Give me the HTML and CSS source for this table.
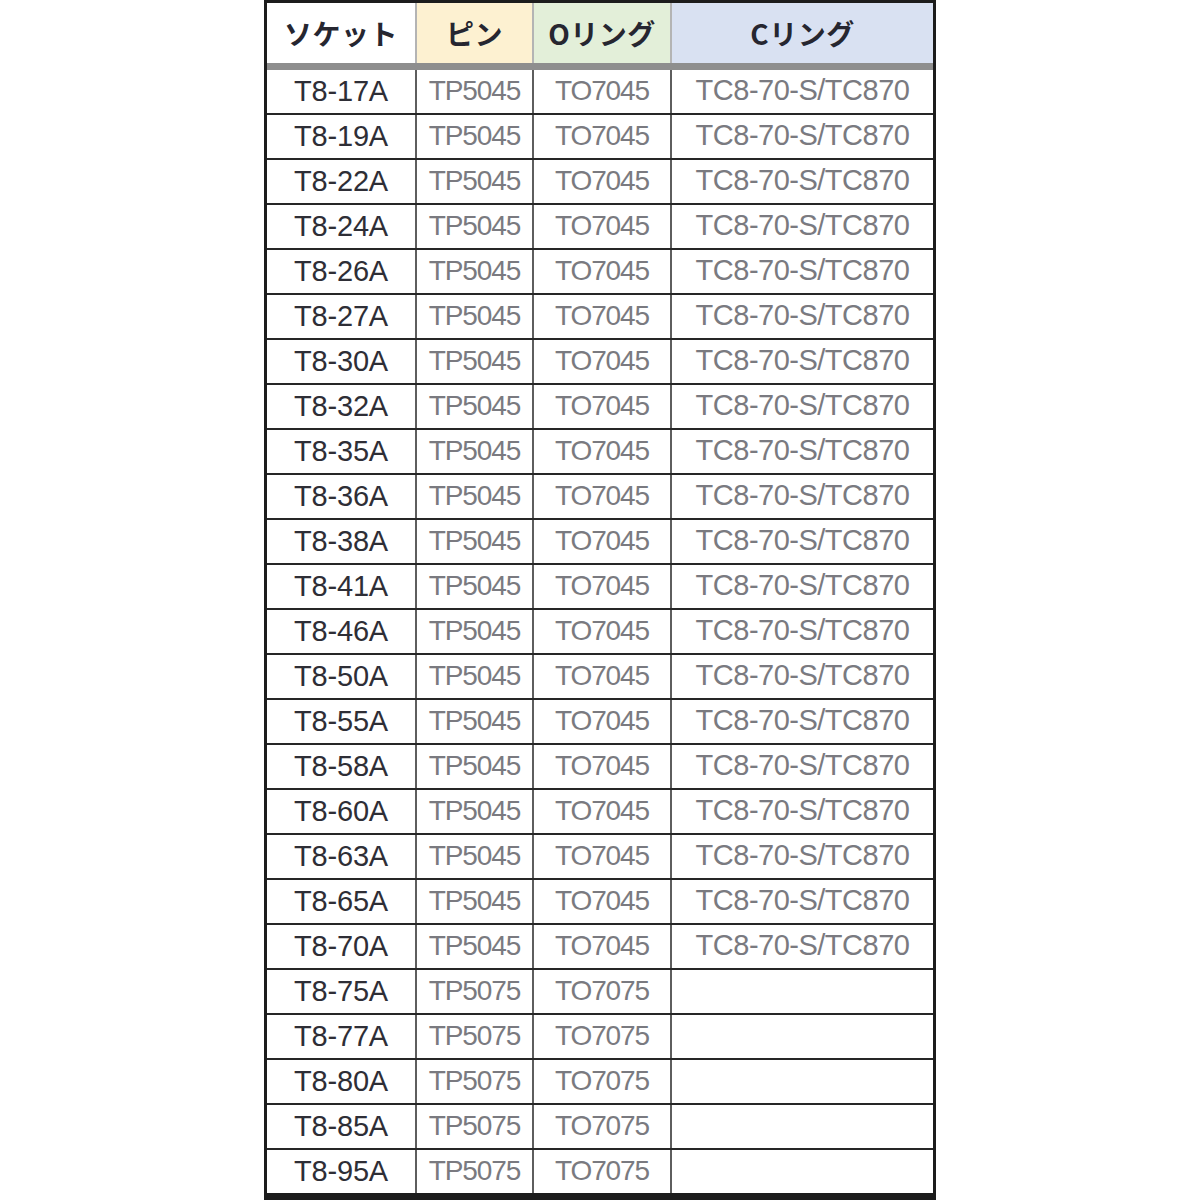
FILE: index.html
```html
<!DOCTYPE html>
<html lang="ja">
<head>
<meta charset="utf-8">
<title>ソケット対応表</title>
<link rel="stylesheet" href="styles.css">
</head>
<body>
<div class="sheet">
  <div class="row head">
    <div class="cell h-socket">ソケット</div>
    <div class="cell h-pin">ピン</div>
    <div class="cell h-oring">Oリング</div>
    <div class="cell h-cring">Cリング</div>
  </div>
  <div class="row"><div class="cell sock">T8-17A</div><div class="cell pin">TP5045</div><div class="cell pin">TO7045</div><div class="cell cr">TC8-70-S/TC870</div></div>
  <div class="row"><div class="cell sock">T8-19A</div><div class="cell pin">TP5045</div><div class="cell pin">TO7045</div><div class="cell cr">TC8-70-S/TC870</div></div>
  <div class="row"><div class="cell sock">T8-22A</div><div class="cell pin">TP5045</div><div class="cell pin">TO7045</div><div class="cell cr">TC8-70-S/TC870</div></div>
  <div class="row"><div class="cell sock">T8-24A</div><div class="cell pin">TP5045</div><div class="cell pin">TO7045</div><div class="cell cr">TC8-70-S/TC870</div></div>
  <div class="row"><div class="cell sock">T8-26A</div><div class="cell pin">TP5045</div><div class="cell pin">TO7045</div><div class="cell cr">TC8-70-S/TC870</div></div>
  <div class="row"><div class="cell sock">T8-27A</div><div class="cell pin">TP5045</div><div class="cell pin">TO7045</div><div class="cell cr">TC8-70-S/TC870</div></div>
  <div class="row"><div class="cell sock">T8-30A</div><div class="cell pin">TP5045</div><div class="cell pin">TO7045</div><div class="cell cr">TC8-70-S/TC870</div></div>
  <div class="row"><div class="cell sock">T8-32A</div><div class="cell pin">TP5045</div><div class="cell pin">TO7045</div><div class="cell cr">TC8-70-S/TC870</div></div>
  <div class="row"><div class="cell sock">T8-35A</div><div class="cell pin">TP5045</div><div class="cell pin">TO7045</div><div class="cell cr">TC8-70-S/TC870</div></div>
  <div class="row"><div class="cell sock">T8-36A</div><div class="cell pin">TP5045</div><div class="cell pin">TO7045</div><div class="cell cr">TC8-70-S/TC870</div></div>
  <div class="row"><div class="cell sock">T8-38A</div><div class="cell pin">TP5045</div><div class="cell pin">TO7045</div><div class="cell cr">TC8-70-S/TC870</div></div>
  <div class="row"><div class="cell sock">T8-41A</div><div class="cell pin">TP5045</div><div class="cell pin">TO7045</div><div class="cell cr">TC8-70-S/TC870</div></div>
  <div class="row"><div class="cell sock">T8-46A</div><div class="cell pin">TP5045</div><div class="cell pin">TO7045</div><div class="cell cr">TC8-70-S/TC870</div></div>
  <div class="row"><div class="cell sock">T8-50A</div><div class="cell pin">TP5045</div><div class="cell pin">TO7045</div><div class="cell cr">TC8-70-S/TC870</div></div>
  <div class="row"><div class="cell sock">T8-55A</div><div class="cell pin">TP5045</div><div class="cell pin">TO7045</div><div class="cell cr">TC8-70-S/TC870</div></div>
  <div class="row"><div class="cell sock">T8-58A</div><div class="cell pin">TP5045</div><div class="cell pin">TO7045</div><div class="cell cr">TC8-70-S/TC870</div></div>
  <div class="row"><div class="cell sock">T8-60A</div><div class="cell pin">TP5045</div><div class="cell pin">TO7045</div><div class="cell cr">TC8-70-S/TC870</div></div>
  <div class="row"><div class="cell sock">T8-63A</div><div class="cell pin">TP5045</div><div class="cell pin">TO7045</div><div class="cell cr">TC8-70-S/TC870</div></div>
  <div class="row"><div class="cell sock">T8-65A</div><div class="cell pin">TP5045</div><div class="cell pin">TO7045</div><div class="cell cr">TC8-70-S/TC870</div></div>
  <div class="row"><div class="cell sock">T8-70A</div><div class="cell pin">TP5045</div><div class="cell pin">TO7045</div><div class="cell cr">TC8-70-S/TC870</div></div>
  <div class="row"><div class="cell sock">T8-75A</div><div class="cell pin">TP5075</div><div class="cell pin">TO7075</div><div class="cell cr"></div></div>
  <div class="row"><div class="cell sock">T8-77A</div><div class="cell pin">TP5075</div><div class="cell pin">TO7075</div><div class="cell cr"></div></div>
  <div class="row"><div class="cell sock">T8-80A</div><div class="cell pin">TP5075</div><div class="cell pin">TO7075</div><div class="cell cr"></div></div>
  <div class="row"><div class="cell sock">T8-85A</div><div class="cell pin">TP5075</div><div class="cell pin">TO7075</div><div class="cell cr"></div></div>
  <div class="row"><div class="cell sock">T8-95A</div><div class="cell pin">TP5075</div><div class="cell pin">TO7075</div><div class="cell cr"></div></div>
</div>
</body>
</html>
```

FILE: styles.css
```css
* { box-sizing: border-box; }
html, body { margin: 0; padding: 0; background: #ffffff; }
body {
  font-family: "Liberation Sans", "Noto Sans CJK JP", sans-serif;
}
.sheet {
  width: 672px;
  margin: 0 auto;
  border-style: solid;
  border-color: #1c1c1c;
  border-width: 3px 3px 7px 3px;
  background: #ffffff;
}
.row {
  display: grid;
  grid-template-columns: 150px 117px 138px 261px;
  height: 45px;
  border-bottom: 2px solid #262626;
}
.row:last-child {
  height: 43px;
  border-bottom: none;
}
.row.head {
  height: 67px;
  border-bottom: 7px solid #8e8e8e;
}
.cell {
  display: flex;
  align-items: center;
  justify-content: center;
  border-right: 2px solid #5e5e5e;
  white-space: nowrap;
}
.cell:last-child { border-right: none; }
.head .cell {
  font-family: "Noto Sans CJK JP", "Liberation Sans", sans-serif;
  font-weight: 700;
  font-size: 28px;
  color: #262630;
  border-right-color: #b4b4b4;
  letter-spacing: 0.5px;
}
.h-socket { background: #ffffff; }
.h-pin { background: #fdf1d1; }
.h-oring { background: #e3efd9; }
.h-cring { background: #d9e1f2; }
.sock {
  font-size: 29px;
  color: #2e2e36;
  letter-spacing: -0.2px;
}
.pin {
  font-size: 28px;
  color: #7a7a80;
  letter-spacing: -1.1px;
  padding-bottom: 1px;
}
.cr {
  font-size: 29px;
  color: #7a7a80;
  letter-spacing: -0.5px;
  padding-bottom: 3px;
}
```
